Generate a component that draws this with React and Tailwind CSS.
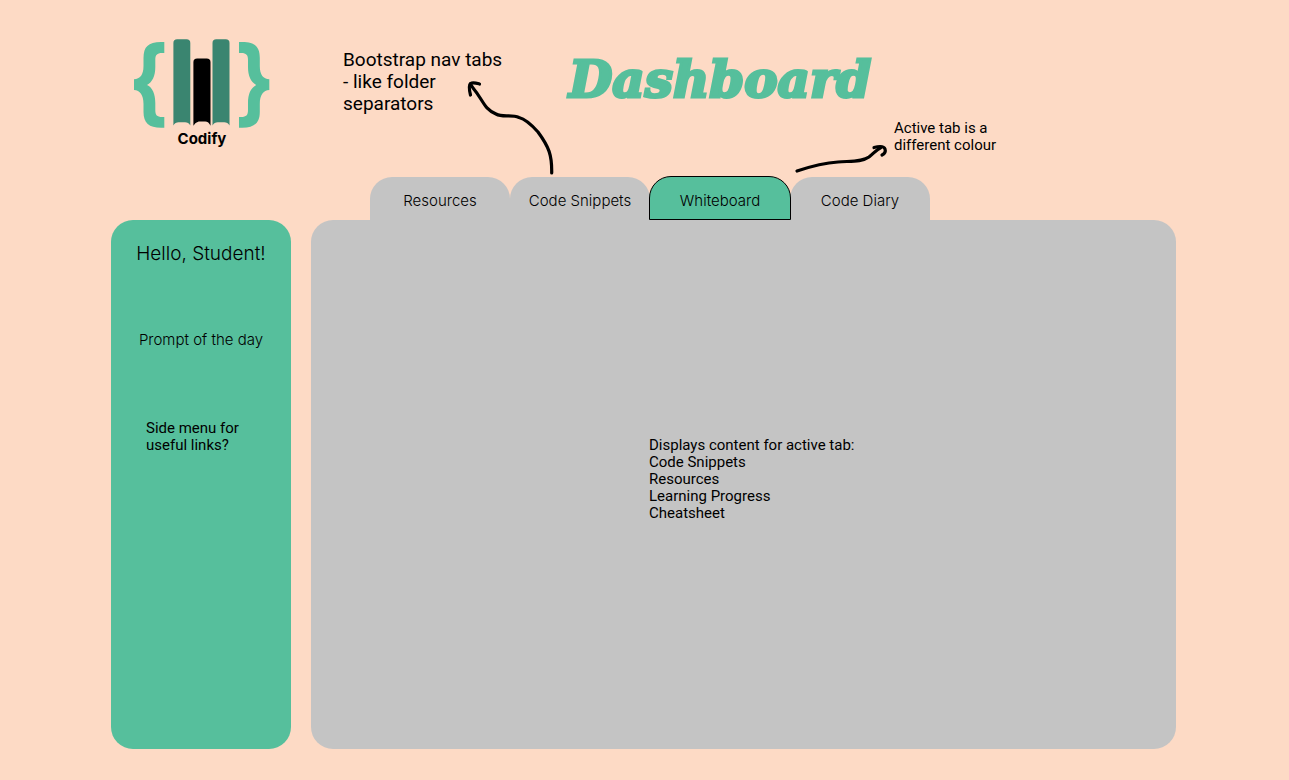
import { useState } from "react";

const TABS = ["Resources", "Code Snippets", "Whiteboard", "Code Diary"];

const BRACE =
  "M30.3 3H27C14 3 9.5 8 9.5 19V27C9.5 36 6 40 0 40.3V51C6 51.3 9.5 56 9.5 65V73C9.5 84 15 88.7 27 88.7H30.3V78H28C23 78 21.3 76 21.3 71V64C21.3 55 18.5 48.5 13 46C18.5 43 21.3 37 21.3 28V21C21.3 16 23 14 28 14H30.3Z";

function Logo() {
  return (
    <a href="#home" className="flex w-[136px] flex-col items-center text-black">
      <svg viewBox="0 0 136 90" className="h-[90px] w-[136px]" aria-hidden="true">
        <g fill="#56bf9c">
          <path d={BRACE} />
          <path d={BRACE} transform="translate(135.3 0) scale(-1 1)" />
        </g>
        <path fill="#3a8570" d="M39.4 86.5V4Q39.4 .3 43.2 .3H52.5Q56.3 .3 56.3 4V86.5Q54.5 83.2 51 83.2H44.7Q41.2 83.2 39.4 86.5Z" />
        <path fill="#000" d="M59.4 86.7V23.2Q59.4 19.5 63.2 19.5H72.7Q76.5 19.5 76.5 23.2V86.7Q74.7 82.4 71.2 82.4H64.7Q61.2 83.2 59.4 86.7Z" />
        <path fill="#3a8570" d="M78.5 86.5V4Q78.5 .3 82.3 .3H91.7Q95.5 .3 95.5 4V86.5Q93.7 83.2 90.2 83.2H83.8Q80.3 83.2 78.5 86.5Z" />
      </svg>
      <span className="font-['Inter',sans-serif] text-[15px] leading-5 font-bold">Codify</span>
    </a>
  );
}

function Arrows() {
  return (
    <svg
      viewBox="0 0 1289 180"
      className="pointer-events-none absolute top-0 left-0 h-[180px] w-[1289px] max-w-none"
      fill="none"
      stroke="#000"
      strokeWidth="3.2"
      strokeLinecap="round"
      strokeLinejoin="round"
      aria-hidden="true"
    >
      <path d="M551.7 173C552 155 549 147 538 132C530 123 525 119 519 117.500C511 114 503 118 496 114C483 108 484 101 473 88L470.500 84" />
      <path d="M470.500 95C469 89 469 85 470.500 83.500C473 82 476 83 479.500 84" />
      <path d="M797 171C809 167 822 163 838 162C851 161 862 162 869 157C874 153 876 150 881 147.500" />
      <path d="M874 147.500C880 146 884 146 885 149C886 152 884 154 882 155" />
    </svg>
  );
}

export default function App() {
  const [active, setActive] = useState("Whiteboard");

  return (
    <div className="relative flex min-h-screen flex-col bg-[#fddac5] pr-[113px] pb-[31px] pl-[111px] font-['Roboto',sans-serif] text-[15px] leading-[17px] text-black">
      <header className="flex h-[177px] items-start pl-[23px]">
        <div className="pt-[39px]">
          <Logo />
        </div>
        <p className="ml-[73px] w-[165px] pt-[49px] text-[19px] leading-[22px]">
          Bootstrap nav tabs - like folder separators
        </p>
        <h1 className="ml-[61px] w-[305px] pt-12 font-['DejaVu_Serif',serif] text-[50px] leading-[64px] font-black text-[#56bf9c] italic [-webkit-text-stroke:3px_#56bf9c]">
          Dashboard
        </h1>
        <p className="ml-5 w-[110px] pt-[120px]">Active tab is a different colour</p>
      </header>
      <Arrows />

      <div className="flex flex-1 gap-5">
        <aside className="mt-[43px] flex w-[180px] shrink-0 flex-col rounded-[22px] bg-[#56bf9c] pt-5 font-['Inter',sans-serif]">
          <h2 className="text-center text-[19px] leading-7 font-light">Hello, Student!</h2>
          <p className="mt-[62px] text-center leading-5 font-light">Prompt of the day</p>
          <p className="mt-[70px] ml-[35px] w-[110px] font-['Roboto',sans-serif]">
            Side menu for useful links?
          </p>
        </aside>

        <main className="flex min-w-0 flex-1 flex-col">
          <div role="tablist" className="flex h-[43px] items-end pl-[59px]">
            {TABS.map((tab) => (
              <button
                key={tab}
                type="button"
                role="tab"
                id={`tab-${tab.replace(" ", "-")}`}
                aria-controls="tab-content"
                aria-selected={active === tab}
                onClick={() => setActive(tab)}
                className={`rounded-t-[22px] pt-1 font-['Inter',sans-serif] font-light ${
                  active === tab
                    ? "relative z-10 -mx-px h-11 w-[142px] border border-black bg-[#56bf9c]"
                    : "h-[43px] w-[140px] bg-[#c4c4c4]"
                }`}
              >
                {tab}
              </button>
            ))}
          </div>
          <section
            id="tab-content"
            role="tabpanel"
            aria-labelledby={`tab-${active.replace(" ", "-")}`}
            className="flex-1 rounded-[22px] bg-[#c4c4c4] pt-[217px] pl-[338px]"
          >
            <p>Displays content for active tab:</p>
            <ul>
              <li>Code Snippets</li>
              <li>Resources</li>
              <li>Learning Progress</li>
              <li>Cheatsheet</li>
            </ul>
          </section>
        </main>
      </div>
    </div>
  );
}
